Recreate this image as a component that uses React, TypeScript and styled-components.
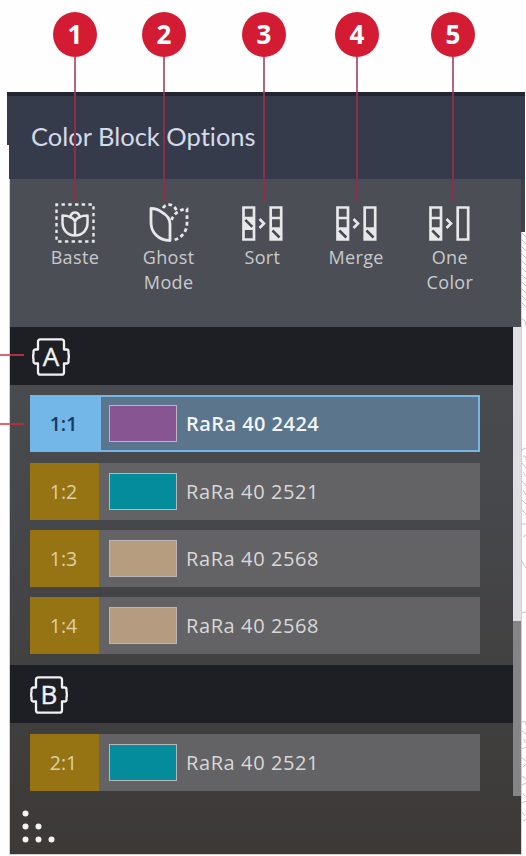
import React from 'react';
import styled, { createGlobalStyle } from 'styled-components';

interface Block {
  id: string;
  color: string;
  label: string;
  active?: boolean;
}

const groupA: Block[] = [
  { id: '1:1', color: '#875592', label: 'RaRa 40 2424', active: true },
  { id: '1:2', color: '#058c9c', label: 'RaRa 40 2521' },
  { id: '1:3', color: '#b79d80', label: 'RaRa 40 2568' },
  { id: '1:4', color: '#b59b80', label: 'RaRa 40 2568' },
];

const groupB: Block[] = [{ id: '2:1', color: '#058c9c', label: 'RaRa 40 2521' }];

const callouts = [75, 164, 264, 357, 453];

const BasteIcon = () => (
  <svg width="40" height="40" viewBox="0 0 40 40" fill="none" stroke="currentColor">
    <path d="M1.5 1.5h37v37h-37z" strokeWidth="2.400" strokeDasharray="3.400 3.327" strokeDashoffset="1.700" />
    <path d="M20 32.500C12 32.500 7.500 26.500 7.500 20v-7.500c3 0 5.500 .3 7.500 1.500 1-2.800 2.500-4.500 5-4.500s4 1.700 5 4.500c2-1.200 4.500-1.500 7.500-1.500V20C32.500 26.500 28 32.500 20 32.500z" strokeWidth="2.500" strokeLinejoin="round" />
    <path d="M20 32.500V19.500M15 14c2.500 .8 4.500 2.500 5 5 .5-2.500 2.500-4.200 5-5" strokeWidth="2.500" />
  </svg>
);

const GhostIcon = () => (
  <svg width="40" height="40" viewBox="0 0 40 40" fill="none" stroke="currentColor" strokeWidth="2.800">
    <path d="M21 37.500C9 37.500 2 29 2 19.500V5.500C6 5.500 9.500 6.500 12.500 9c5.500 3 8.500 7 8.500 12z" strokeLinejoin="round" />
    <path d="M14 5C17 0 25.500 0 28 9" strokeDasharray="3.700 2.800" />
    <path d="M22.500 17C24.500 11 30 6.500 38 6V20c0 8.500-5.500 15.500-13.500 17" strokeDasharray="3.700 2.900" />
  </svg>
);

interface BlocksIconProps {
  hatchLeft: number;
  after: 'sort' | 'merge' | 'one';
}

// Stack of colour blocks turning into another stack
const BlocksIcon = ({ hatchLeft, after }: BlocksIconProps) => (
  <svg width="41" height="35" viewBox="0 0 41 35" fill="none" stroke="currentColor" strokeWidth="2.700">
    <path d="M1.500 1.500h10.500v32H1.500zM1.500 12h10.500M1.500 22.700h10.500" />
    <path d="M28.700 1.500h10.500v32H28.700z" />
    {after === 'sort' && <path d="M28.700 12h10.500" />}
    {after !== 'one' && <path d="M28.700 22.700h10.500" />}
    <path d={`M2 ${hatchLeft}h9.500v10H2z`} fill="currentColor" stroke="none" />
    <path d={`M3.300 ${hatchLeft + 1.500}l7 7`} stroke="#45474c" strokeWidth="2.500" />
    {after !== 'one' && <path d="M29 23h10v10H29z" fill="currentColor" stroke="none" />}
    {after !== 'one' && <path d="M30.500 24.500l7 7" stroke="#45474c" strokeWidth="2.500" />}
    <path d="M17.500 13l4.500 4.500-4.500 4.500" strokeWidth="2.600" />
  </svg>
);

const HoopIcon = ({ letter }: { letter: string }) => (
  <svg width="38" height="38" viewBox="0 0 38 38">
    <path
      d="M8.500 1.300h21a2.500 2.500 0 0 1 2.500 2.500V11.500h2.500a2 2 0 0 1 2 2v2.500l.3 .8v3.400l-.3 .8v2.500a2 2 0 0 1-2 2H32v8.700a2.500 2.500 0 0 1-2.500 2.500h-21a2.500 2.500 0 0 1-2.500-2.500V25.500H3.500a2 2 0 0 1-2-2v-2.500l-.3-.8v-3.400l.3-.8v-2.500a2 2 0 0 1 2-2H6V3.800a2.500 2.500 0 0 1 2.500-2.500z"
      fill="none"
      stroke="currentColor"
      strokeWidth="2.300"
      strokeLinejoin="round"
    />
    <text x="19" y="28.300" textAnchor="middle" fill="currentColor" stroke="currentColor" strokeWidth="0.400" fontFamily="Open Sans, sans-serif" fontSize="26" fontWeight="400">
      {letter}
    </text>
  </svg>
);

const BlockRow = ({ block }: { block: Block }) => (
  <Row $active={block.active}>
    <Index $active={block.active}>{block.id}</Index>
    <Swatch $color={block.color} />
    <Thread $active={block.active}>{block.label}</Thread>
  </Row>
);

const App: React.FC = () => {
  return (
    <>
      <GlobalStyle />
      <Page>
        <Stitches width="6" height="624" viewBox="0 0 6 624" fill="none" stroke="#c4c4c6">
          <path d="M0 0l5 5M0 7l5 5M0 14l5 5M0 21l5 5M0 28l5 5M0 35l5 5M0 42l5 5M0 49l5 5M0 56l5 5M0 63l5 5M0 70l5 5" />
          <path d="M1 87q4 1 4 6M0 218l5-2M2 224q4 0 3 4M1 231l4 5M2 240l3 4M1 249l4 5M2 258l3 5M1 268l4 4M1 278l4 4M0 292h5M2 305l3-2M0 328l5 8M1 381l4-1" />
          <path d="M1 490q4-2 4 3M1 499l4 3M2 507q3 1 2 4M1 517l4-2M1 526l4 3M2 535l3-3M1 544l4 3M1 553l4-2M2 562l3 3M1 571l4-2M1 580l3 4M2 589l3-2" />
        </Stitches>
        <HeaderBar>
          <Title>Color Block Options</Title>
        </HeaderBar>
        <Panel>
          <Toolbar>
            <Tool>
              <IconBox><BasteIcon /></IconBox>
              Baste
            </Tool>
            <Tool>
              <IconBox><GhostIcon /></IconBox>
              Ghost<br />Mode
            </Tool>
            <Tool>
              <IconBox><BlocksIcon hatchLeft={12.3} after="sort" /></IconBox>
              Sort
            </Tool>
            <Tool>
              <IconBox><BlocksIcon hatchLeft={23} after="merge" /></IconBox>
              Merge
            </Tool>
            <Tool>
              <IconBox><BlocksIcon hatchLeft={23} after="one" /></IconBox>
              One<br />Color
            </Tool>
          </Toolbar>
          <Body>
            <List>
              <Group $indent={22}><HoopIcon letter="A" /></Group>
              <Rows>
                {groupA.map((block) => <BlockRow key={block.id} block={block} />)}
              </Rows>
              <Group $indent={20}><HoopIcon letter="B" /></Group>
              <Rows>
                {groupB.map((block) => <BlockRow key={block.id} block={block} />)}
              </Rows>
            </List>
            <ScrollTrack>
              <ScrollThumb />
            </ScrollTrack>
          </Body>
          <Footer>
            <svg width="34" height="34" viewBox="0 0 34 34" fill="#f5f4f2">
              <circle cx="3.500" cy="3.500" r="3" />
              <circle cx="3.500" cy="16.500" r="3" />
              <circle cx="16.500" cy="16.500" r="3" />
              <circle cx="3.500" cy="29.500" r="3" />
              <circle cx="16.500" cy="29.500" r="3" />
              <circle cx="29.500" cy="29.500" r="3" />
            </svg>
          </Footer>
        </Panel>
        {callouts.map((x, i) => (
          <Callout key={x} style={{ left: x - 22 }}>
            <Badge>{i + 1}</Badge>
            <Leader />
          </Callout>
        ))}
        <SideLeader $top={354} />
        <SideLeader $top={423} />
      </Page>
    </>
  );
};

const GlobalStyle = createGlobalStyle`
  * {
    box-sizing: border-box;
  }

  body {
    margin: 0;
    background: #fefefe;
    font-family: 'Open Sans', 'Noto Sans', sans-serif;
  }
`;

const Page = styled.div`
  position: relative;
  width: 526px;
  height: 856px;
  padding-top: 92px;
  overflow: hidden;
`;

const Stitches = styled.svg`
  position: absolute;
  left: 521px;
  top: 232px;
`;

const HeaderBar = styled.header`
  display: flex;
  align-items: center;
  height: 87px;
  margin: 0 1px 0 7px;
  padding: 0 0 3px 24px;
  border-top: 4px solid #222630;
  background: #353b4b;
  clip-path: polygon(0 0, 100% 0, 100% 100%, 2px 100%, 2px 53px, 0 53px);
`;

const Title = styled.h1`
  margin: 0;
  color: #d5dae8;
  font-family: Lato, sans-serif;
  font-size: 25.500px;
  font-weight: 400;
  font-variant-ligatures: none;
  white-space: nowrap;
`;

const Panel = styled.section`
  width: 511px;
  height: 675px;
  margin-left: 10px;
  background: linear-gradient(#4c4e54 0%, #4b4c50 24%, #46474a 50%, #403f3f 80%, #3c3937 100%);
  box-shadow: 0 0 0 1px #8e8e8e66;
`;

const Toolbar = styled.div`
  display: grid;
  grid-template-columns: repeat(5, 93.75px);
  height: 148px;
  padding: 24px 0 0 18px;
  background: #4b4e54;
  box-shadow: 4px 0 0 #3d4343;
  clip-path: polygon(0 0, 515px 0, 515px 53px, 511px 53px, 511px 100%, 0 100%);
`;

const Tool = styled.div`
  display: flex;
  flex-direction: column;
  align-items: center;
  color: #c9cacd;
  font-size: 18px;
  line-height: 25px;
  letter-spacing: 0.35px;
  text-align: center;
`;

const IconBox = styled.span`
  display: grid;
  place-items: center;
  height: 40px;
  margin-bottom: 2px;
  color: #e6e8ea;
`;

const Body = styled.div`
  display: flex;
  height: 469px;
`;

const List = styled.div`
  flex: 1;
`;

const Group = styled.div<{ $indent: number }>`
  display: flex;
  align-items: center;
  height: 58px;
  padding: 1px 0 0 ${({ $indent }) => $indent}px;
  background: #1e1f24;
  color: #f1f1f3;
`;

const Rows = styled.div`
  display: flex;
  flex-direction: column;
  gap: 10.3px;
  padding: 10.400px 33px 11px 20px;
`;

const Row = styled.div<{ $active?: boolean }>`
  display: flex;
  align-items: center;
  height: 57px;
  background: ${({ $active }) => ($active ? '#5b758c' : '#636265')};
  box-shadow: ${({ $active }) => ($active ? 'inset 0 0 0 2px #73b7e6' : 'none')};
`;

const Index = styled.span<{ $active?: boolean }>`
  display: grid;
  place-items: center;
  width: ${({ $active }) => ($active ? '71px' : '69px')};
  height: 100%;
  padding-right: ${({ $active }) => ($active ? '4px' : '2px')};
  margin-right: ${({ $active }) => ($active ? '8px' : '10px')};
  background: ${({ $active }) => ($active ? '#73b7e9' : '#967313')};
  color: ${({ $active }) => ($active ? '#173b5c' : '#e0cfa4')};
  font-size: 19.500px;
  font-weight: ${({ $active }) => ($active ? 600 : 400)};
`;

const Swatch = styled.span<{ $color: string }>`
  width: 68px;
  height: 37px;
  margin-right: 9px;
  border: 1px solid #b9b5b9;
  background: ${({ $color }) => $color};
`;

const Thread = styled.span<{ $active?: boolean }>`
  color: ${({ $active }) => ($active ? '#f2f5f8' : '#d8d8d9')};
  font-size: 20px;
  font-weight: ${({ $active }) => ($active ? 600 : 400)};
  letter-spacing: ${({ $active }) => ($active ? '0.45px' : '0.6px')};
  white-space: nowrap;
`;

const ScrollTrack = styled.div`
  display: flex;
  align-items: flex-end;
  width: 8px;
  background: #dedee3;
`;

const ScrollThumb = styled.div`
  width: 100%;
  height: 175px;
  background: #858587;
`;

const Footer = styled.footer`
  padding: 14px 0 0 12px;
`;

const Callout = styled.div`
  position: absolute;
  top: 12px;
  display: flex;
  flex-direction: column;
  align-items: center;
  width: 44px;
`;

const Badge = styled.span`
  display: grid;
  place-items: center;
  width: 44px;
  height: 45px;
  padding-bottom: 2px;
  border-radius: 50%;
  background: #d31c33;
  color: #fff;
  font-size: 26px;
  font-weight: 700;
  line-height: 1;
`;

const Leader = styled.span`
  width: 2px;
  height: 144px;
  background: linear-gradient(#b8657a 0 35px, #8d2f4b 35px);
`;

const SideLeader = styled.span<{ $top: number }>`
  position: absolute;
  left: 0;
  top: ${({ $top }) => $top}px;
  width: 24px;
  height: 2px;
  background: linear-gradient(90deg, #df6675 0 10px, #b32f40 10px);
`;

export default App;
